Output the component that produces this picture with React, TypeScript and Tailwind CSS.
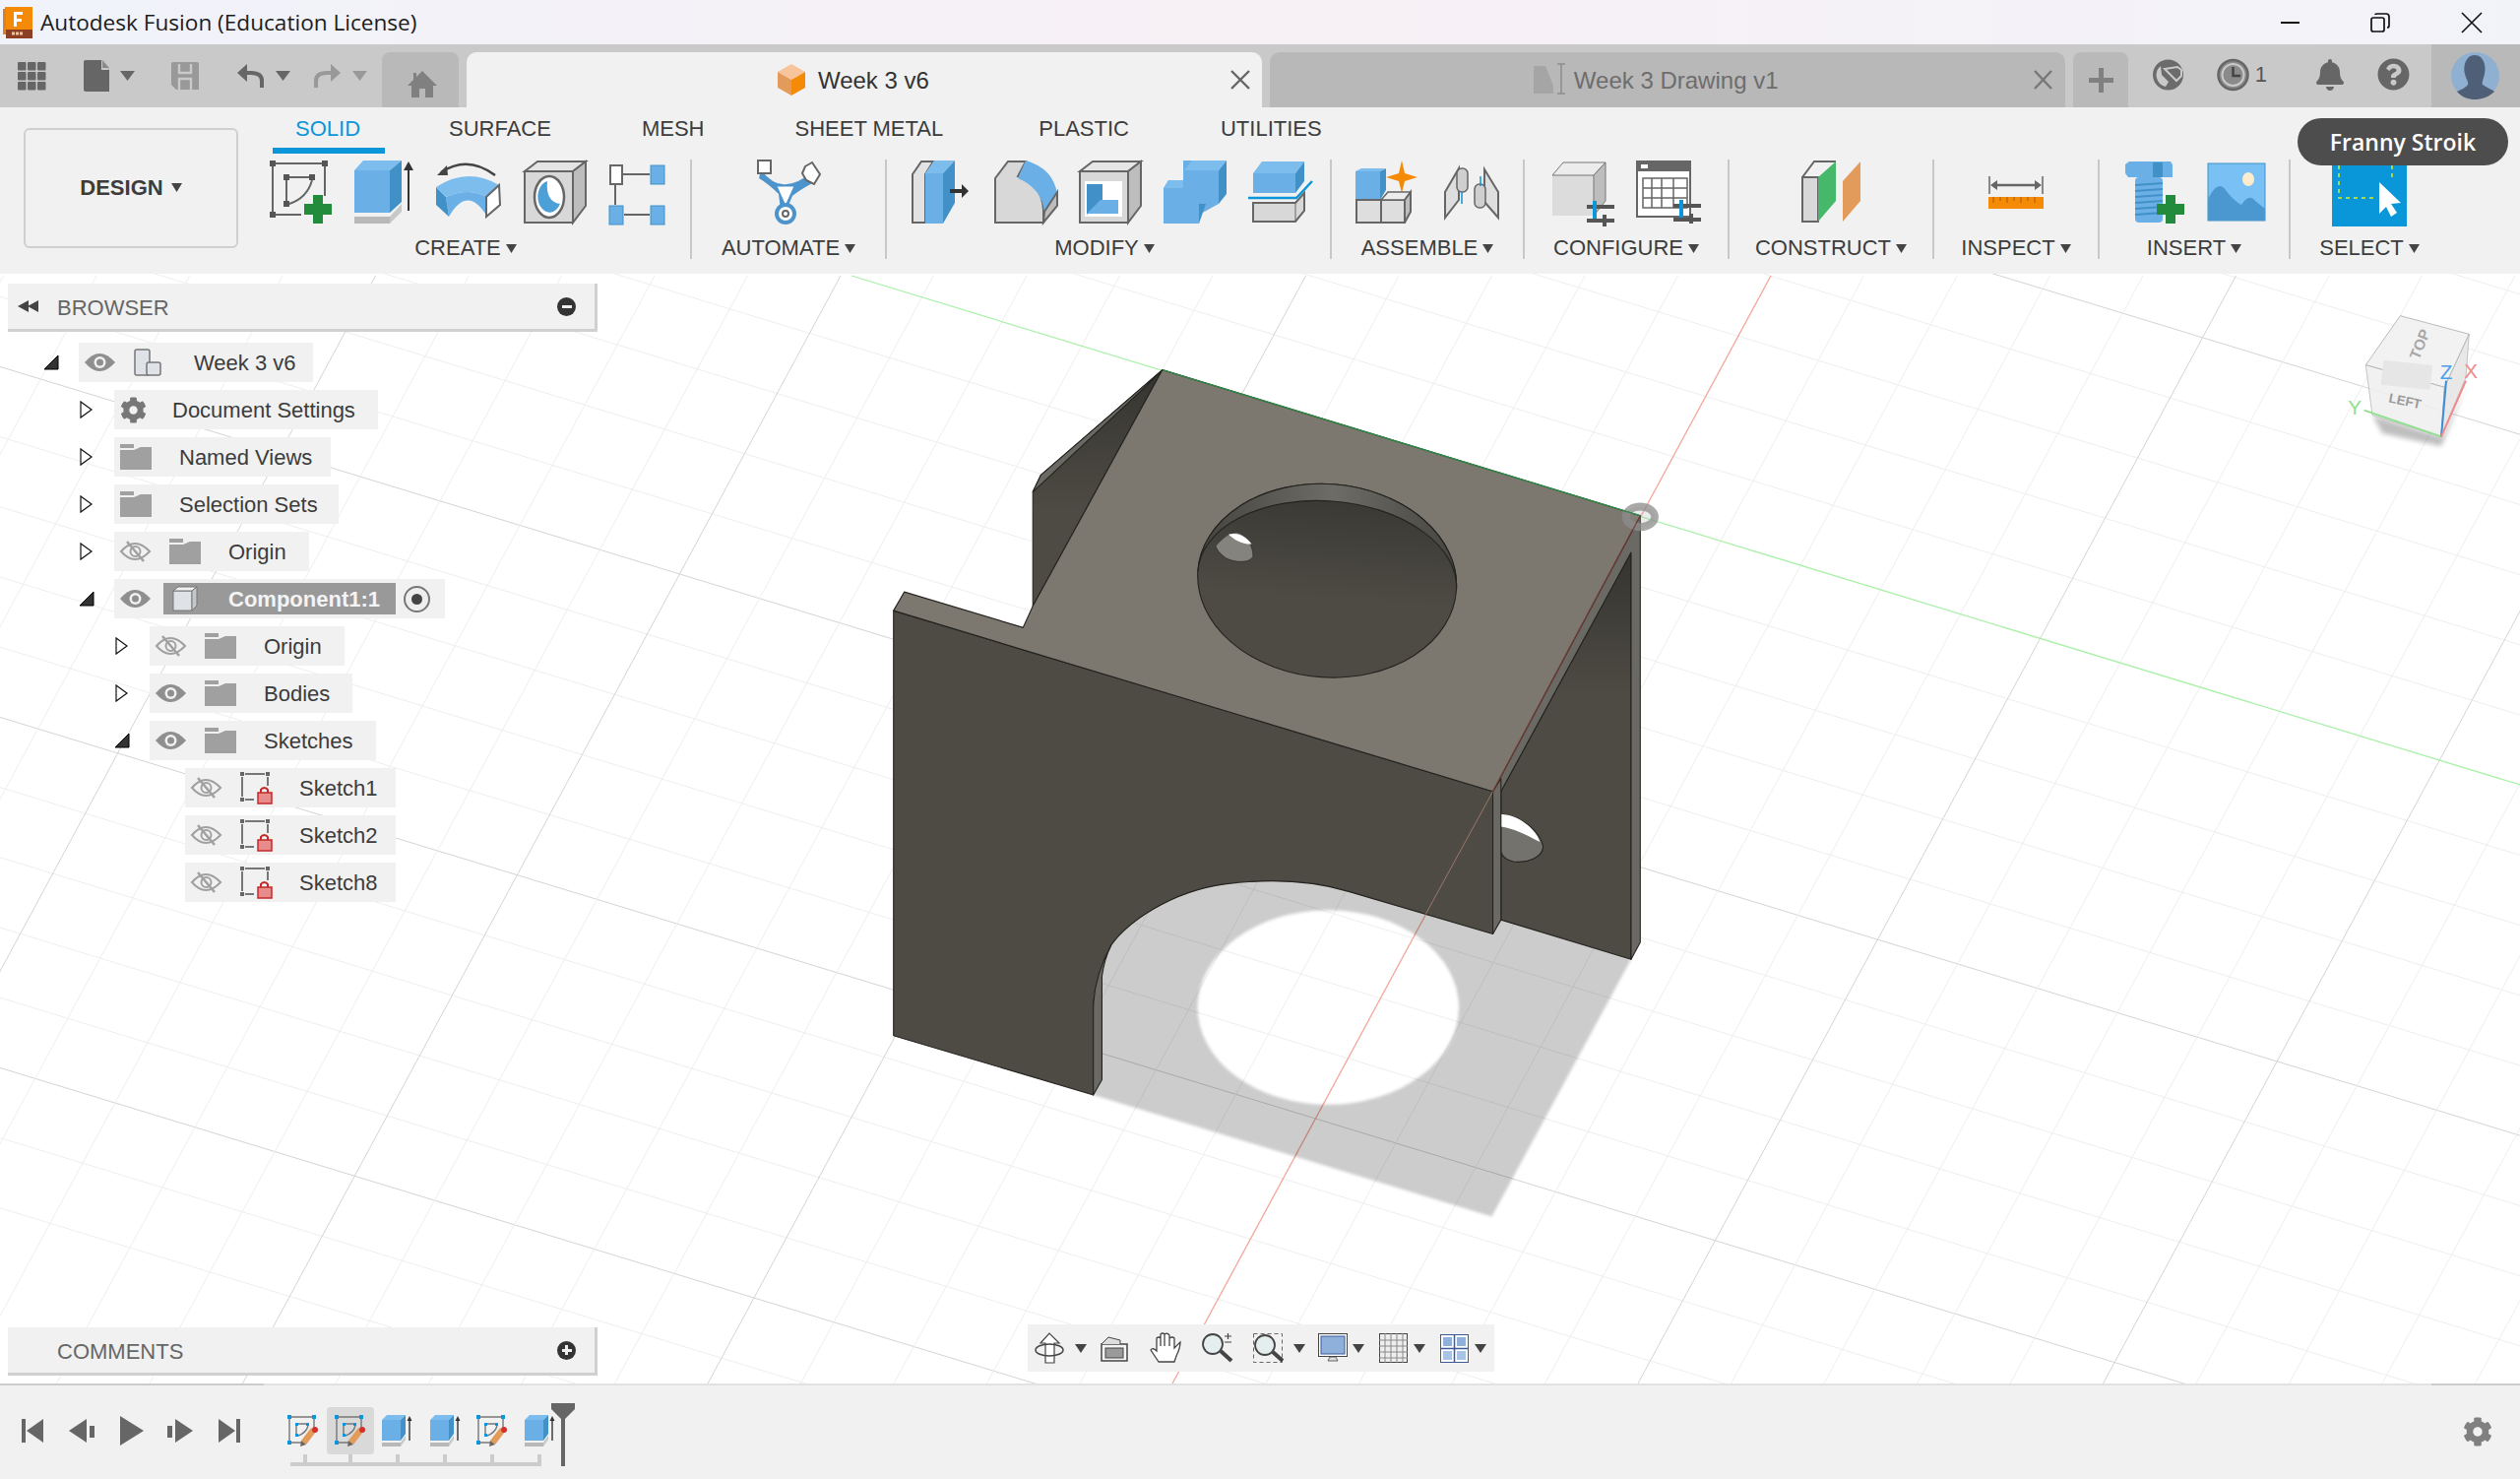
import type { ReactNode } from 'react';
import { FaBell, FaCog, FaQuestionCircle } from 'react-icons/fa';

const BLUE = '#6ab0e6';
const BLUE_D = '#4191c8';
const BLUE_L = '#7dbdee';
const LINE = '#666666';

function Ico({ w, h, children, className = '' }: { w: number; h: number; children: ReactNode; className?: string }) {
  return (
    <svg width={w} height={h} viewBox={`0 0 ${w} ${h}`} className={`shrink-0 overflow-visible ${className}`}>
      {children}
    </svg>
  );
}

function Caret({ w = 11, h = 9, fill = '#444444' }: { w?: number; h?: number; fill?: string }) {
  return (
    <Ico w={w} h={h}>
      <polygon points={`0,0 ${w},0 ${w / 2},${h}`} fill={fill} />
    </Ico>
  );
}

function GreenPlus({ x, y }: { x: number; y: number }) {
  return (
    <g transform={`translate(${x} ${y})`}>
      <rect x="0" y="9" width="28" height="11" fill="#228b3c" />
      <rect x="9" y="0" width="10" height="29" fill="#228b3c" />
    </g>
  );
}

/* ---------- ribbon icons ---------- */
const SketchIcon = () => (
  <Ico w={63} h={64}>
    <g fill="#555">
      <rect x="0" y="0" width="6" height="6" />
      <rect x="53" y="0" width="6" height="6" />
      <rect x="0" y="52" width="6" height="6" />
      <rect x="14" y="14" width="6" height="6" />
      <rect x="40" y="14" width="6" height="6" />
      <rect x="14" y="41" width="6" height="6" />
    </g>
    <path d="M6 3H53M3 6V52M56 6V36M6 55H32M20 17H40M17 20V41M20 44Q38 38 43 20" fill="none" stroke={LINE} strokeWidth="2" />
    <GreenPlus x={35} y={35} />
  </Ico>
);

const ExtrudeIcon = () => (
  <Ico w={60} h={64}>
    <rect x="0" y="10" width="36" height="43" fill={BLUE} />
    <polygon points="0,10 9,0 48,0 36,10" fill={BLUE_L} />
    <polygon points="36,10 48,0 48,42 36,53" fill={BLUE_D} />
    <rect x="0" y="57" width="36" height="7" fill="#b8b8b8" />
    <polygon points="36,57 48,44 48,52 36,64" fill="#c8c8c8" />
    <path d="M55 6V51" stroke="#333" strokeWidth="2" />
    <polygon points="50,10 55,1 60,10" fill="#333" />
  </Ico>
);

const RevolveIcon = () => (
  <Ico w={66} h={64}>
    <path d="M5 12Q32 -6 60 15" fill="none" stroke="#444" strokeWidth="2.5" />
    <polygon points="1,15 11,5 12,15" fill="#444" />
    <path d="M10 37Q32 27 52 37V57Q32 24 13 57Z" fill={BLUE} />
    <path d="M0 27L10 37L13 57L0 45Z" fill={BLUE_D} />
    <path d="M0 27Q32 6 64 25L52 37Q32 27 10 37Z" fill={BLUE_L} />
    <polygon points="51,37 64,25 65,45 51,57" fill="#fff" stroke={LINE} strokeWidth="2" />
  </Ico>
);

const HoleIcon = () => (
  <Ico w={64} h={64}>
    <rect x="1" y="11" width="49" height="52" fill="#d8d8d8" stroke={LINE} strokeWidth="2" />
    <polygon points="1,11 14,1 63,1 50,11" fill="#e4e4e4" stroke={LINE} strokeWidth="2" />
    <polygon points="50,11 63,1 63,46 50,63" fill="#bdbdbd" stroke={LINE} strokeWidth="2" />
    <ellipse cx="26" cy="37" rx="15" ry="21" fill="#fff" stroke={LINE} strokeWidth="2.5" />
    <path d="M24 21A12 16 0 1 0 37 44Q22 42 24 21Z" fill="#4d9fd8" />
  </Ico>
);

const PatternIcon = () => (
  <Ico w={57} h={64}>
    <rect x="1" y="5" width="12" height="19" fill="#fff" stroke={LINE} strokeWidth="2" />
    <rect x="42" y="5" width="14" height="19" fill={BLUE} stroke={BLUE_D} />
    <rect x="0" y="46" width="14" height="19" fill={BLUE} stroke={BLUE_D} />
    <rect x="42" y="46" width="14" height="19" fill={BLUE} stroke={BLUE_D} />
    <path d="M14 14H41M6 25V45M15 55H41" stroke={LINE} strokeWidth="2" />
  </Ico>
);

const AutomateIcon = () => (
  <Ico w={64} h={64}>
    <path d="M4 10Q16 24 26 24Q38 26 56 12L58 22Q40 32 36 36L30 50H24L22 34Q12 24 2 18Z" fill="#4d93cc" />
    <path d="M20 26H38L29 46Z" fill="#fff" stroke="#4d93cc" />
    <circle cx="29" cy="54" r="9" fill="#fff" stroke="#4d93cc" strokeWidth="4" />
    <circle cx="29" cy="54" r="3" fill="none" stroke={LINE} strokeWidth="2" />
    <rect x="1" y="0" width="13" height="13" fill="#fff" stroke={LINE} strokeWidth="2" />
    <polygon points="49,6 56,2 64,14 58,24 50,20 46,13" fill="#fff" stroke={LINE} strokeWidth="2" />
  </Ico>
);

const PressPullIcon = () => (
  <Ico w={58} h={64}>
    <polygon points="1,63 1,14 10,1 22,1 14,14 14,63" fill="#e2e2e2" stroke={LINE} strokeWidth="2" />
    <rect x="14" y="13" width="18" height="51" fill={BLUE} />
    <polygon points="14,13 23,0 44,0 32,13" fill={BLUE_L} />
    <polygon points="32,13 44,0 44,43 32,64" fill={BLUE_D} />
    <path d="M39 31H54" stroke="#333" strokeWidth="4" />
    <polygon points="51,24 58,31 51,38" fill="#333" />
  </Ico>
);

const FilletIcon = () => (
  <Ico w={64} h={64}>
    <path d="M1 63V18L14 1H32L24 16Q48 22 50 50V63Z" fill="#d8d8d8" stroke={LINE} strokeWidth="2" />
    <path d="M32 0Q60 8 64 34L51 52Q48 28 24 18Z" fill={BLUE} />
    <path d="M51 52L64 32V46L50 63Z" fill="#bdbdbd" stroke={LINE} strokeWidth="2" />
  </Ico>
);

const ShellIcon = () => (
  <Ico w={64} h={64}>
    <rect x="1" y="11" width="49" height="52" fill="#d8d8d8" stroke={LINE} strokeWidth="2" />
    <polygon points="1,11 14,1 63,1 50,11" fill="#e6e6e6" stroke={LINE} strokeWidth="2" />
    <polygon points="50,11 63,1 63,46 50,63" fill="#bdbdbd" stroke={LINE} strokeWidth="2" />
    <rect x="6" y="21" width="38" height="36" fill="#fff" />
    <polygon points="8,24 24,24 24,40 8,55" fill={BLUE_D} />
    <polygon points="8,54 22,40 40,40 40,54" fill={BLUE} />
  </Ico>
);

const CombineIcon = () => (
  <Ico w={64} h={64}>
    <polygon points="0,28 0,64 36,64 36,55 56,44 56,0 20,0 20,20 5,20" fill={BLUE} />
    <polygon points="21,10 29,0 64,0 56,10" fill={BLUE_L} />
    <polygon points="56,10 64,0 64,34 56,44" fill={BLUE_D} />
    <polygon points="0,28 6,20 20,20 20,28" fill={BLUE_L} />
    <polygon points="36,44 43,44 36,64" fill={BLUE_D} />
  </Ico>
);

const OffsetIcon = () => (
  <Ico w={65} h={62}>
    <rect x="5" y="12" width="43" height="20" fill={BLUE} />
    <polygon points="5,12 14,0 57,0 48,12" fill={BLUE_L} />
    <polygon points="48,12 57,0 57,20 48,32" fill={BLUE_D} />
    <path d="M0 37H49L65 20" fill="none" stroke="#0a96d8" strokeWidth="2.5" />
    <path d="M5 42H48L57 32V50L48 61H5Z" fill="#d8d8d8" stroke={LINE} strokeWidth="2" />
    <path d="M48 42V61" stroke={LINE} strokeWidth="1" />
  </Ico>
);

const JointNewIcon = () => (
  <Ico w={63} h={64}>
    <rect x="0" y="11" width="25" height="29" fill={BLUE} />
    <polygon points="0,11 6,8 30,8 25,11" fill={BLUE_L} />
    <polygon points="25,11 31,8 31,30 25,40" fill={BLUE_D} />
    <polygon points="47,0 50,13 63,17 50,21 47,33 44,21 31,17 44,13" fill="#f58a07" />
    <rect x="1" y="40" width="25" height="23" fill="#dedede" stroke={LINE} strokeWidth="2" />
    <rect x="26" y="40" width="24" height="23" fill="#dedede" stroke={LINE} strokeWidth="2" />
    <polygon points="26,40 33,32 56,32 50,40" fill="#ececec" stroke={LINE} strokeWidth="1.5" />
    <polygon points="50,40 56,32 56,52 50,63" fill="#bdbdbd" stroke={LINE} strokeWidth="2" />
  </Ico>
);

const JointIcon = () => (
  <Ico w={56} h={56}>
    <polygon points="1,28 15,4 15,36 1,54" fill="#dedede" stroke={LINE} strokeWidth="2" />
    <polygon points="41,5 55,28 55,54 41,38" fill="#dedede" stroke={LINE} strokeWidth="2" />
    <rect x="13" y="4" width="11" height="24" rx="5" fill="#cfcfcf" stroke={LINE} strokeWidth="1.5" />
    <rect x="31" y="20" width="11" height="24" rx="5" fill="#cfcfcf" stroke={LINE} strokeWidth="1.5" />
    <path d="M18 28V40M37 12V22" stroke="#0a96d8" strokeWidth="1.5" />
  </Ico>
);

const ConfigBox = () => (
  <Ico w={64} h={62}>
    <rect x="1" y="14" width="42" height="41" fill="#dcdcdc" />
    <polygon points="1,14 12,1 55,1 43,14" fill="#ececec" stroke="#777" />
    <polygon points="43,14 55,1 55,40 43,55" fill="#bdbdbd" stroke="#777" />
    <path d="M36 46H64M36 60H64" stroke="#555" strokeWidth="4" />
    <rect x="42" y="40" width="4" height="18" fill="#0a96d8" />
    <rect x="52" y="54" width="4" height="12" fill="#555" />
  </Ico>
);

const ConfigTable = () => (
  <Ico w={66} h={64}>
    <rect x="1" y="1" width="54" height="56" fill="#fff" stroke="#666" strokeWidth="2" />
    <rect x="0" y="0" width="56" height="11" fill="#666" />
    <rect x="5" y="4" width="7" height="4" fill="#fff" />
    <path d="M7 18H52V48H7ZM7 28H52M7 38H52M16 18V48M26 18V48M38 18V48" fill="#fff" stroke="#666" strokeWidth="1.5" />
    <path d="M38 46H66M38 60H66" stroke="#555" strokeWidth="4" />
    <rect x="44" y="40" width="4" height="18" fill="#0a96d8" />
    <rect x="54" y="54" width="4" height="10" fill="#555" />
  </Ico>
);

const ConstructIcon = () => (
  <Ico w={60} h={62}>
    <polygon points="1,16 1,61 17,61 17,16" fill="#d8d8d8" stroke={LINE} strokeWidth="2" />
    <path d="M1 16L13 0H35" fill="none" stroke={LINE} strokeWidth="2" />
    <polygon points="17,16 35,0 35,40 17,61" fill="#46b86a" />
    <polygon points="42,20 60,0 60,40 42,61" fill="#e39b5b" />
  </Ico>
);

const InspectIcon = () => (
  <Ico w={56} h={33}>
    <path d="M1 0V18M55 0V18" stroke={LINE} strokeWidth="1.5" />
    <path d="M6 9H50" stroke={LINE} strokeWidth="2.5" />
    <polygon points="2,9 9,4 9,14" fill={LINE} />
    <polygon points="54,9 47,4 47,14" fill={LINE} />
    <rect x="0" y="21" width="56" height="12" fill="#f58a07" />
    <path d="M5 21V27M12 21V25M19 21V27M26 21V25M33 21V27M40 21V25M47 21V27" stroke="#a65c00" strokeWidth="1" />
  </Ico>
);

const BoltIcon = () => (
  <Ico w={60} h={62}>
    <polygon points="0,3 4,0 46,0 48,3 48,16 44,16 3,16 0,12" fill={BLUE} />
    <rect x="28" y="1" width="10" height="15" fill={BLUE_D} />
    <rect x="10" y="16" width="28" height="46" rx="4" fill={BLUE} />
    <path d="M10 24L38 22M10 30L38 28M10 36L38 34M10 42L38 40M10 48L38 46M10 54L38 52" stroke={BLUE_D} strokeWidth="2" />
    <GreenPlus x={32} y={34} />
  </Ico>
);

const ImageIcon = () => (
  <Ico w={58} h={58}>
    <rect x="0" y="0" width="58" height="58" fill="#79c0f5" stroke="#4191c8" />
    <ellipse cx="41" cy="16" rx="6" ry="7" fill="#fbeccd" />
    <path d="M0 36Q10 16 18 27Q26 38 34 42Q42 30 48 38L58 46V58H0Z" fill="#4b97cf" />
  </Ico>
);

const SelectIcon = () => (
  <Ico w={76} h={70}>
    <rect x="0" y="0" width="76" height="70" fill="#0a97d9" />
    <path d="M7 8V41H46M61 8V24" fill="none" stroke="#a8d84a" strokeWidth="2" strokeDasharray="4 4" />
    <polygon points="48,25 48,57 55,50 60,60 66,56 60,47 70,46" fill="#fff" />
  </Ico>
);

/* ---------- tree icons ---------- */
const EyeOn = () => (
  <Ico w={31} h={20}>
    <path d="M0 10Q15 -8 31 10Q15 28 0 10Z" fill="#8f8f8f" />
    <circle cx="15.5" cy="10" r="6" fill="#f1f1f1" />
    <circle cx="15.5" cy="10" r="3.5" fill="#8f8f8f" />
  </Ico>
);

const EyeOff = () => (
  <Ico w={31} h={20}>
    <path d="M1 10Q15 -6 30 10Q15 26 1 10Z" fill="none" stroke="#a0a0a0" strokeWidth="2" />
    <circle cx="15.5" cy="10" r="5" fill="none" stroke="#a0a0a0" strokeWidth="2" />
    <path d="M7 0L24 20" stroke="#a0a0a0" strokeWidth="2.5" />
  </Ico>
);

const Folder = () => (
  <Ico w={32} h={26}>
    <rect x="0" y="0" width="14" height="4" fill="#a0a0a0" />
    <polygon points="0,6 14,6 21,3 32,3 32,26 0,26" fill="#a0a0a0" />
  </Ico>
);

const DocIcon = () => (
  <Ico w={28} h={28}>
    <rect x="1" y="1" width="15" height="26" rx="2" fill="#dfe3e8" stroke="#777" strokeWidth="1.5" />
    <rect x="13" y="14" width="14" height="13" rx="2" fill="#dfe3e8" stroke="#777" strokeWidth="1.5" />
  </Ico>
);

const SketchLock = () => (
  <Ico w={32} h={32}>
    <g fill="#666">
      <rect x="0" y="0" width="4" height="4" />
      <rect x="26" y="0" width="4" height="4" />
      <rect x="0" y="26" width="4" height="4" />
    </g>
    <path d="M5 2H25M2 5V25M5 28H14M28 5V14" stroke="#777" strokeWidth="2" />
    <path d="M21 22V18A4 4 0 0 1 28 18V22" fill="none" stroke="#c62828" strokeWidth="2" />
    <rect x="18" y="21" width="14" height="11" fill="#e78b8b" stroke="#c62828" strokeWidth="1.5" />
  </Ico>
);

const TriOpen = () => (
  <Ico w={14} h={14}>
    <polygon points="0,14 14,0 14,14" fill="#333" stroke="#000" />
  </Ico>
);

const TriClosed = () => (
  <Ico w={13} h={18}>
    <polygon points="1,1 12,9 1,17" fill="#fff" stroke="#111" strokeWidth="1.2" />
  </Ico>
);

type RowProps = {
  indent: string;
  tri?: 'open' | 'closed';
  width: string;
  eye?: 'on' | 'off';
  icon: ReactNode;
  text: string;
  textClass: string;
};

function Row({ indent, tri, width, eye, icon, text, textClass }: RowProps) {
  return (
    <div className={`flex items-center ${indent}`}>
      {tri && (
        <span className="flex w-[35px] shrink-0 items-center">{tri === 'open' ? <TriOpen /> : <TriClosed />}</span>
      )}
      <div className={`flex h-[40px] items-center gap-[19px] bg-[#f1f1f1] px-[6px] ${width}`}>
        {eye === 'on' && <EyeOn />}
        {eye === 'off' && <EyeOff />}
        {icon}
        <span className={`whitespace-nowrap text-[22px] text-[#3c3c3c] ${textClass}`}>{text}</span>
      </div>
    </div>
  );
}

function Tree() {
  return (
    <div className="mt-[11px] flex flex-col gap-[8px]">
      <Row indent="pl-[37px]" tri="open" width="w-[238px]" eye="on" icon={<DocIcon />} text="Week 3 v6" textClass="ml-[14px]" />
      <Row indent="pl-[73px]" tri="closed" width="w-[268px]" icon={<FaCog className="h-[27px] w-[27px] shrink-0 text-[#777777]" />} text="Document Settings" textClass="ml-[7px]" />
      <Row indent="pl-[73px]" tri="closed" width="w-[220px]" icon={<Folder />} text="Named Views" textClass="ml-[9px]" />
      <Row indent="pl-[73px]" tri="closed" width="w-[228px]" icon={<Folder />} text="Selection Sets" textClass="ml-[9px]" />
      <Row indent="pl-[73px]" tri="closed" width="w-[198px]" eye="off" icon={<Folder />} text="Origin" textClass="ml-[9px]" />
      <div className="flex items-center pl-[73px]">
        <span className="flex w-[35px] shrink-0 items-center">
          <TriOpen />
        </span>
        <div className="flex h-[40px] w-[336px] items-center bg-[#f1f1f1] pl-[6px]">
          <EyeOn />
          <div className="ml-[13px] flex h-[32px] w-[236px] items-center bg-[#999999] pl-[9px]">
            <Ico w={26} h={26}>
              <rect x="1" y="5" width="19" height="20" fill="#dfe3e8" stroke="#777" />
              <polygon points="1,5 6,1 25,1 20,5" fill="#f2f2f2" stroke="#777" />
              <polygon points="20,5 25,1 25,20 20,25" fill="#c4c8cc" stroke="#777" />
            </Ico>
            <span className="ml-[31px] whitespace-nowrap text-[22px] font-bold text-[#f4f4f4]">Component1:1</span>
          </div>
          <span className="ml-[8px] flex h-[27px] w-[27px] items-center justify-center rounded-full border-2 border-[#777777] bg-[#eeeeee]">
            <span className="h-[11px] w-[11px] rounded-full bg-[#444444]" />
          </span>
        </div>
      </div>
      <Row indent="pl-[109px]" tri="closed" width="w-[198px]" eye="off" icon={<Folder />} text="Origin" textClass="ml-[9px]" />
      <Row indent="pl-[109px]" tri="closed" width="w-[206px]" eye="on" icon={<Folder />} text="Bodies" textClass="ml-[9px]" />
      <Row indent="pl-[109px]" tri="open" width="w-[230px]" eye="on" icon={<Folder />} text="Sketches" textClass="ml-[9px]" />
      {['Sketch1', 'Sketch2', 'Sketch8'].map((s) => (
        <Row key={s} indent="pl-[180px]" width="w-[214px]" eye="off" icon={<SketchLock />} text={s} textClass="ml-[9px]" />
      ))}
    </div>
  );
}

/* ---------- viewport drawing ---------- */
function GridLines() {
  const minorA = Array.from({ length: 36 }, (_, i) => i - 18);
  const minorB = Array.from({ length: 46 }, (_, i) => i - 22);
  return (
    <g>
      {minorA.map((k) => {
        const b = 16.4 + k * 71.2;
        const major = k % 5 === 0;
        if (k === 0) return null;
        return (
          <line key={`a${k}`} x1={0} y1={b} x2={2560} y2={b + 2560 * 0.305} stroke={major ? '#d4d4d4' : '#eeeeee'} strokeWidth={1} />
        );
      })}
      {minorB.map((k) => {
        const x0 = 1799 + k * 94.5;
        const major = k % 5 === 0;
        if (k === 0) return null;
        return (
          <line key={`b${k}`} x1={x0} y1={280} x2={x0 - 0.54 * 1125} y2={1405} stroke={major ? '#d4d4d4' : '#eeeeee'} strokeWidth={1} />
        );
      })}
      <line x1={865} y1={280} x2={2560} y2={797} stroke="#a9f0a9" strokeWidth="1.3" />
      <line x1={1799} y1={280} x2={1191} y2={1405} stroke="#f4a69c" strokeWidth="1.3" />
    </g>
  );
}

function Part() {
  const FACE = '#4e4b44';
  const RIM = '#6b6964';
  const TOP = '#7c7870';
  return (
    <g transform="translate(860 340) scale(0.5485 0.574)" stroke="#24231f" strokeWidth="2" strokeLinejoin="round">
      <path
        d="M457 940L1212 940L1453 1105L1195 1560L457 1345ZM650 1190A242 172 0 0 0 1134 1190A242 172 0 0 0 650 1190Z"
        fill="#000"
        fillOpacity="0.2"
        fillRule="evenodd"
        stroke="none"
        filter="url(#soft)"
      />
      {/* back flange */}
      <polygon points="345,278 360,248 585,62 345,480" fill="url(#flangeL)" />
      <polygon points="345,278 360,248 585,62 550,95" fill={RIM} />
      {/* right flange */}
      <polygon points="1212,808 1453,385 1453,1105 1212,1035" fill="url(#flangeR)" />
      <path d="M1212 848C1250 850 1285 880 1290 905C1290 925 1260 935 1235 932C1225 930 1215 925 1212 915Z" fill="#74726d" />
      <path d="M1212 848C1250 850 1278 878 1284 897C1260 885 1232 872 1212 870Z" fill="#fff" stroke="none" />
      <polygon points="1470,320 1470,1075 1453,1105 1453,385 1212,808 1197,808" fill={RIM} />
      {/* front plate */}
      <path d="M87 488L1197 808V1060L930 985C860 965 780 962 700 972C600 985 520 1040 490 1080C470 1115 457 1150 457 1195V1345L87 1240Z" fill={FACE} />
      <path d="M457 1345L473 1318V1135C476 1115 482 1095 490 1080C470 1115 457 1150 457 1195Z" fill={RIM} />
      <polygon points="1197,808 1212,785 1212,1035 1197,1060" fill={RIM} />
      {/* top face */}
      <polygon points="585,62 1470,320 1197,808 87,488 107,455 327,518 345,480" fill={TOP} />
      <g transform="rotate(4 890 435)">
        <ellipse cx="890" cy="435" rx="240" ry="171" fill="url(#holeIn)" />
        <path d="M650 435A240 171 0 0 1 1130 435A240 141 0 0 0 650 435Z" fill="url(#holeRim)" />
        <path d="M680 388C690 375 705 360 720 362C735 365 750 385 750 402C745 415 715 415 700 408C690 402 682 395 680 388Z" fill="#85837d" strokeWidth="1" />
        <path d="M702 366C720 360 735 368 746 380C730 382 715 376 702 366Z" fill="#fff" stroke="none" />
      </g>
      {/* origin marker */}
      <ellipse cx="1470" cy="322" rx="27" ry="18" fill="#9a9a9a" fillOpacity="0.2" stroke="#8c8c8c" strokeOpacity="0.75" strokeWidth="14" />
      <line x1="585" y1="62" x2="1470" y2="320" stroke="#2f8a46" strokeWidth="2.5" />
      <line x1="1470" y1="320" x2="1197" y2="808" stroke="#7b3f36" strokeWidth="2" />
      <line x1="1197" y1="808" x2="1072" y2="1026" stroke="#f4a69c" strokeWidth="1.4" strokeOpacity="0.6" />
    </g>
  );
}

function ViewportDrawing() {
  return (
    <svg className="absolute inset-0 h-full w-full" viewBox="0 278 2560 1127">
      <defs>
        <filter id="soft" x="-10%" y="-10%" width="120%" height="120%">
          <feGaussianBlur stdDeviation="3" />
        </filter>
        <filter id="cubeShadow" x="-40%" y="-40%" width="180%" height="180%">
          <feGaussianBlur stdDeviation="8" />
        </filter>
        <linearGradient id="flangeL" x1="0" y1="0" x2="0" y2="1">
          <stop offset="0" stopColor="#35342f" />
          <stop offset="0.6" stopColor="#4e4b44" />
        </linearGradient>
        <linearGradient id="flangeR" x1="0" y1="0" x2="0" y2="1">
          <stop offset="0" stopColor="#35342f" />
          <stop offset="0.35" stopColor="#4e4b44" />
        </linearGradient>
        <linearGradient id="holeIn" x1="0" y1="0" x2="0" y2="1">
          <stop offset="0.1" stopColor="#3b3a35" />
          <stop offset="0.6" stopColor="#4e4b44" />
        </linearGradient>
        <linearGradient id="holeRim" x1="0" y1="0" x2="1" y2="0">
          <stop offset="0" stopColor="#45443f" />
          <stop offset="0.5" stopColor="#6e6c66" />
          <stop offset="1" stopColor="#45443f" />
        </linearGradient>
      </defs>
      <GridLines />
      <Part />
    </svg>
  );
}

function ViewCube() {
  return (
    <svg className="absolute right-[0px] top-[2px] overflow-visible" width="220" height="200" viewBox="0 0 660 600">
      <polygon points="210,425 420,490 500,330 420,520 240,480" fill="#000" opacity="0.25" filter="url(#cubeShadow)" />
      <polygon points="295,122 505,178 430,340 190,272" fill="#f0f0f0" fillOpacity="0.85" stroke="#9a9a9a" strokeWidth="2" />
      <polygon points="190,272 430,340 420,490 210,425" fill="#eeeeee" fillOpacity="0.85" stroke="#aaaaaa" strokeWidth="2" />
      <polygon points="505,178 430,340 420,490 495,310" fill="#e4e4e4" fillOpacity="0.85" stroke="#aaaaaa" strokeWidth="2" />
      <rect x="240" y="265" width="150" height="75" fill="#e6e6e6" transform="rotate(6 315 300)" />
      <text x="0" y="0" fontFamily="Liberation Sans" fontSize="46" fontWeight="700" fill="#a8a8a8" transform="translate(352 258) rotate(-68)">TOP</text>
      <text x="0" y="0" fontFamily="Liberation Sans" fontSize="40" fontWeight="700" fill="#9a9a9a" transform="translate(258 385) rotate(12)">LEFT</text>
      <line x1="185" y1="410" x2="420" y2="490" stroke="#8fe08f" strokeWidth="6" />
      <line x1="420" y1="490" x2="435" y2="320" stroke="#3d8ed6" strokeWidth="6" />
      <line x1="420" y1="490" x2="495" y2="320" stroke="#f08a8a" strokeWidth="6" />
      <text x="136" y="422" fontFamily="Liberation Sans" fontSize="62" fill="#8fe08f">Y</text>
      <text x="416" y="316" fontFamily="Liberation Sans" fontSize="62" fill="#4da0ee">Z</text>
      <text x="490" y="312" fontFamily="Liberation Sans" fontSize="62" fill="#f08a8a">X</text>
    </svg>
  );
}

function NavBar() {
  const stroke = '#444444';
  return (
    <div className="absolute bottom-[12px] left-[1044px] flex h-[48px] w-[474px] items-center bg-[#f1f1f1] pl-[8px]">
      <Ico w={29} h={30}>
        <path d="M10 30V10H5L14 0L24 10H19V30Z" fill="#fff" stroke={stroke} strokeWidth="1.2" />
        <ellipse cx="14" cy="17" rx="14" ry="6" fill="none" stroke={stroke} strokeWidth="1.5" />
      </Ico>
      <span className="ml-[11px] flex"><Caret w={12} h={9} /></span>
      <span className="ml-[14px] flex">
        <Ico w={28} h={28}>
          <rect x="1" y="10" width="26" height="17" fill="#f4f4f4" stroke={stroke} strokeWidth="1.5" />
          <rect x="5" y="14" width="18" height="10" fill="#9a9a9a" stroke={stroke} />
          <path d="M1 10L8 3L20 6V10" fill="#ddd" stroke={stroke} />
        </Ico>
      </span>
      <span className="ml-[23px] flex">
        <Ico w={30} h={32}>
          <path d="M8 30L0 18Q2 15 6 19V6Q8 4 10 6V14V2Q12 0 14 2V14V2Q17 0 19 3V14V6Q22 4 24 6V16L30 10Q30 16 26 24L24 30Z" fill="#fff" stroke={stroke} strokeWidth="1.3" />
        </Ico>
      </span>
      <span className="ml-[22px] flex">
        <Ico w={31} h={30}>
          <circle cx="11" cy="11" r="10" fill="#e4eeee" stroke={stroke} strokeWidth="1.8" />
          <path d="M19 18L30 28" stroke={stroke} strokeWidth="4" />
          <path d="M23 3H30M26.5 0V6M23 9H30" stroke={stroke} strokeWidth="1.2" />
        </Ico>
      </span>
      <span className="ml-[21px] flex">
        <Ico w={30} h={30}>
          <rect x="0.5" y="0.5" width="29" height="29" fill="none" stroke="#666" strokeDasharray="4 3" />
          <circle cx="12" cy="12" r="10" fill="#e4eeee" stroke={stroke} strokeWidth="1.8" />
          <path d="M20 19L30 28" stroke={stroke} strokeWidth="4" />
        </Ico>
      </span>
      <span className="ml-[11px] flex"><Caret w={12} h={9} /></span>
      <span className="ml-[13px] flex">
        <Ico w={30} h={30}>
          <rect x="0.5" y="0.5" width="29" height="23" fill="#fff" stroke={stroke} />
          <rect x="3" y="3" width="24" height="18" fill="#8fb0db" stroke="#3b5a9a" />
          <path d="M12 24H18L20 28H10Z" fill="#ddd" stroke={stroke} strokeWidth="0.8" />
        </Ico>
      </span>
      <span className="ml-[5px] flex"><Caret w={12} h={9} /></span>
      <span className="ml-[15px] flex">
        <Ico w={29} h={30}>
          <rect x="0.5" y="0.5" width="28" height="29" fill="#eee" stroke={stroke} />
          <path d="M0 7H29M0 13H29M0 19H29M0 25H29M6 0V30M12 0V30M18 0V30M24 0V30" stroke="#888" strokeWidth="1" />
        </Ico>
      </span>
      <span className="ml-[6px] flex"><Caret w={12} h={9} /></span>
      <span className="ml-[15px] flex">
        <Ico w={29} h={29}>
          <rect x="0.5" y="0.5" width="28" height="28" fill="#fff" stroke="#3b5a9a" />
          <path d="M14.5 0V29M0 14.5H29" stroke="#3b5a9a" strokeWidth="1.5" />
          <rect x="3" y="3" width="9" height="9" fill="#8fb0db" />
          <rect x="17" y="3" width="9" height="9" fill="#8fb0db" />
          <rect x="3" y="17" width="9" height="9" fill="#a9c3e4" />
          <rect x="17" y="17" width="9" height="9" fill="#a9c3e4" />
        </Ico>
      </span>
      <span className="ml-[6px] flex"><Caret w={12} h={9} /></span>
    </div>
  );
}

/* ---------- chrome ---------- */
function TitleBar() {
  return (
    <div className="flex h-[45px] items-center bg-gradient-to-r from-[#f0f3fa] via-[#f7f0f5] to-[#f2f3f9] pl-[3px]">
      <Ico w={30} h={32}>
        <polygon points="2,0 30,0 30,24 2,24" fill="#f58a07" />
        <rect x="0" y="2" width="3" height="26" fill="#d9822a" />
        <rect x="3" y="23" width="27" height="9" fill="#8d3f26" />
        <path d="M11 5H20V8H14V12H19V15H14V20H11Z" fill="#fff" />
        <path d="M9 27H21" stroke="#f3c39a" strokeWidth="3" strokeDasharray="3 1" />
      </Ico>
      <span className="ml-[8px] whitespace-nowrap pt-[1px] font-['Open_Sans',sans-serif] text-[22.6px] text-[#1c1c1c]">
        Autodesk Fusion (Education License)
      </span>
      <div className="ml-auto flex items-center pr-[39px]">
        <span className="h-[2px] w-[19px] bg-[#111111]" />
        <span className="ml-[72px] flex">
          <Ico w={20} h={20}>
            <rect x="1" y="5" width="13" height="14" rx="2" fill="none" stroke="#111" strokeWidth="1.7" />
            <path d="M5 2Q5 1 7 1H16Q19 1 19 4V13Q19 15 17 15" fill="none" stroke="#111" strokeWidth="1.7" />
          </Ico>
        </span>
        <span className="ml-[73px] flex">
          <Ico w={20} h={20}>
            <path d="M0 0L20 20M20 0L0 20" stroke="#111" strokeWidth="1.6" />
          </Ico>
        </span>
      </div>
    </div>
  );
}

function TabBar() {
  return (
    <div className="flex h-[64px] bg-[#c9c9c9]">
      <div className="flex h-full w-[388px] items-center pl-[18px]">
        <Ico w={29} h={28}>
          {[0, 10, 20].map((y) =>
            [0, 10, 20].map((x) => <rect key={`${x}-${y}`} x={x} y={y} width="8.5" height="8.5" rx="1" fill="#666" />),
          )}
        </Ico>
        <span className="ml-[38px] flex">
          <Ico w={26} h={32}>
            <path d="M2 0H18L26 10V32H2Q0 32 0 30V2Q0 0 2 0Z" fill="#666" />
            <path d="M18 0V10H26Z" fill="#c9c9c9" />
            <path d="M19 0L26 8H19Z" fill="#8a8a8a" />
          </Ico>
        </span>
        <span className="ml-[11px] flex"><Caret w={15} h={10} fill="#666666" /></span>
        <span className="ml-[37px] flex">
          <Ico w={28} h={28}>
            <path d="M2 0H26Q28 0 28 2V28H5L0 23V2Q0 0 2 0Z" fill="#999" />
            <path d="M8 2V11H20V2M8 28V17H20V28" fill="none" stroke="#c9c9c9" strokeWidth="2.4" />
          </Ico>
        </span>
        <span className="ml-[39px] flex">
          <Ico w={27} h={24}>
            <path d="M25 24V17Q25 9 14 9H5" fill="none" stroke="#666" strokeWidth="4" />
            <polygon points="0,9 10,0 10,18" fill="#666" />
          </Ico>
        </span>
        <span className="ml-[12px] flex"><Caret w={15} h={10} fill="#666666" /></span>
        <span className="ml-[24px] flex">
          <Ico w={27} h={24}>
            <path d="M2 24V17Q2 9 13 9H22" fill="none" stroke="#999" strokeWidth="4" />
            <polygon points="27,9 17,0 17,18" fill="#999" />
          </Ico>
        </span>
        <span className="ml-[12px] flex"><Caret w={15} h={10} fill="#999999" /></span>
      </div>
      <div className="mt-[8px] flex w-[78px] items-center justify-center rounded-t-[8px] bg-[#b9b9b9] pl-[5px] pt-[8px]">
        <Ico w={30} h={27}>
          <path d="M15 0L30 15H26V27H18V18H12V27H4V15H0L6 9V2H9V6Z" fill="#808080" />
        </Ico>
      </div>
      <div className="ml-[8px] mt-[8px] flex w-[808px] items-center rounded-t-[10px] bg-[#f1f1f1] pl-[316px]">
        <Ico w={28} h={32}>
          <polygon points="14,0 28,8 14,16 0,8" fill="#f7c49b" />
          <polygon points="0,8 14,16 14,32 0,24" fill="#e39b5b" />
          <polygon points="28,8 14,16 14,32 28,24" fill="#f58a07" />
        </Ico>
        <span className="ml-[13px] pt-[2px] text-[24px] text-[#333333]">Week 3 v6</span>
        <span className="ml-auto mr-[12px] flex">
          <Ico w={20} h={18}>
            <path d="M1 0L19 18M19 0L1 18" stroke="#666" strokeWidth="2.4" />
          </Ico>
        </span>
      </div>
      <div className="ml-[8px] mt-[8px] flex w-[808px] items-center rounded-t-[10px] bg-[#b8b8b8] pl-[268px]">
        <Ico w={32} h={32}>
          <path d="M0 2H12L20 22V30H0Z" fill="#a5a5a5" />
          <path d="M24 0H32M28 0V30M24 30H32" stroke="#8c8c8c" strokeWidth="1.5" />
        </Ico>
        <span className="ml-[9px] pt-[2px] text-[24px] text-[#6d6d6d]">Week 3 Drawing v1</span>
        <span className="ml-auto mr-[13px] flex">
          <Ico w={19} h={18}>
            <path d="M1 0L18 18M18 0L1 18" stroke="#777" strokeWidth="2.4" />
          </Ico>
        </span>
      </div>
      <div className="ml-[8px] mt-[8px] flex w-[56px] items-center justify-center rounded-t-[8px] bg-[#b9b9b9] pl-[2px]">
        <Ico w={25} h={25}>
          <path d="M12.5 0V25M0 12.5H25" stroke="#808080" strokeWidth="5" />
        </Ico>
      </div>
      <div className="ml-[25px] flex items-center pb-[3px]">
        <Ico w={31} h={32}>
          <circle cx="15.5" cy="16" r="15.5" fill="#6b6b6b" />
          <path d="M8 7A12 12 0 0 0 13 28L16 23L9 16Z" fill="#c9c9c9" />
          <path d="M12 10L24 22L29 17V11L25 8Z" fill="#6b6b6b" stroke="#c9c9c9" strokeWidth="2" />
        </Ico>
        <span className="ml-[34px] flex">
          <Ico w={33} h={32}>
            <ellipse cx="16.5" cy="16" rx="15" ry="15" fill="#8a8a8a" stroke="#666" strokeWidth="2.5" />
            <ellipse cx="16.5" cy="16" rx="11" ry="11" fill="none" stroke="#c9c9c9" strokeWidth="2" />
            <path d="M16.5 8V17H24" fill="none" stroke="#444" strokeWidth="2.5" />
          </Ico>
        </span>
        <span className="ml-[6px] text-[22px] leading-none text-[#555555]">1</span>
        <FaBell className="ml-[50px] h-[32px] w-[28px] text-[#666666]" />
        <FaQuestionCircle className="ml-[34px] h-[33px] w-[33px] text-[#666666]" />
      </div>
      <div className="ml-[22px] flex w-[90px] items-center justify-center bg-[#b9b9b9]">
        <Ico w={49} h={48}>
          <ellipse cx="24.5" cy="24" rx="24.5" ry="24" fill="#8fb0d0" />
          <path d="M24 3C33 3 36 14 34 22C33 27 31 30 32 33C36 36 42 38 44 40C38 46 30 48 24 48C18 48 11 46 6 40C10 38 15 36 17 33C18 30 15 27 14 22C12 14 15 3 24 3Z" fill="#4f5f78" />
        </Ico>
      </div>
    </div>
  );
}

const ribbonTabs = [
  { label: 'SOLID', cls: 'ml-[32px] w-[114px] pl-[23px] text-[#0a96d8] border-[#0a96d8]' },
  { label: 'SURFACE', cls: 'ml-[65px] text-[#3c3c3c] border-transparent' },
  { label: 'MESH', cls: 'ml-[92px] text-[#3c3c3c] border-transparent' },
  { label: 'SHEET METAL', cls: 'ml-[92px] text-[#3c3c3c] border-transparent' },
  { label: 'PLASTIC', cls: 'ml-[97px] text-[#3c3c3c] border-transparent' },
  { label: 'UTILITIES', cls: 'ml-[93px] text-[#3c3c3c] border-transparent' },
];

type GroupProps = { width: string; label: string; gap: string; last?: boolean; labelClass?: string; children: ReactNode };

function Group({ width, label, gap, last, labelClass = '', children }: GroupProps) {
  return (
    <div className={`flex h-[101px] shrink-0 flex-col items-center ${last ? '' : 'border-r-2 border-[#c8c8c8]'} ${width}`}>
      <div className={`flex h-[65px] items-center pt-[1px] ${gap}`}>{children}</div>
      <div className={`mt-[14px] flex items-center gap-[5px] whitespace-nowrap text-[22px] leading-[22px] text-[#3c3c3c] ${labelClass}`}>
        {label}
        <Caret />
      </div>
    </div>
  );
}

function Ribbon() {
  return (
    <div className="flex h-[169px] bg-[#f1f1f1]">
      <div className="pl-[24px] pt-[21px]">
        <div className="flex h-[122px] w-[218px] items-center justify-center gap-[8px] rounded-[6px] border-2 border-[#cfcfcf] pb-[2px] text-[22px] font-bold text-[#3c3c3c]">
          DESIGN
          <Caret />
        </div>
      </div>
      <div className="pl-[3px]">
        <div className="flex h-[47px]">
          {ribbonTabs.map((t) => (
            <div key={t.label} className={`flex h-[47px] items-center whitespace-nowrap border-b-[6px] pt-[1px] text-[22px] ${t.cls}`}>
              {t.label}
            </div>
          ))}
        </div>
        <div className="mt-[6px] flex">
          <Group width="w-[458px]" label="CREATE" gap="gap-[23px] pl-[3px]">
            <SketchIcon />
            <ExtrudeIcon />
            <RevolveIcon />
            <HoleIcon />
            <PatternIcon />
          </Group>
          <Group width="w-[198px]" label="AUTOMATE" gap="">
            <AutomateIcon />
          </Group>
          <Group width="w-[452px]" label="MODIFY" gap="gap-[22px] pl-[7px]" labelClass="mr-[8px]">
            <PressPullIcon />
            <span className="ml-[4px] flex">
              <FilletIcon />
            </span>
            <ShellIcon />
            <CombineIcon />
            <OffsetIcon />
          </Group>
          <Group width="w-[196px]" label="ASSEMBLE" gap="gap-[27px]">
            <JointNewIcon />
            <JointIcon />
          </Group>
          <Group width="w-[208px]" label="CONFIGURE" gap="gap-[22px]">
            <ConfigBox />
            <ConfigTable />
          </Group>
          <Group width="w-[208px]" label="CONSTRUCT" gap="">
            <ConstructIcon />
          </Group>
          <Group width="w-[168px]" label="INSPECT" gap="">
            <InspectIcon />
          </Group>
          <Group width="w-[194px]" label="INSERT" gap="gap-[24px] pl-[2px]">
            <BoltIcon />
            <ImageIcon />
          </Group>
          <Group width="w-[160px]" label="SELECT" gap="" last>
            <SelectIcon />
          </Group>
        </div>
      </div>
    </div>
  );
}

function Panel({ title, back, sign }: { title: string; back?: boolean; sign: '-' | '+' }) {
  return (
    <div className="flex h-[49px] w-[599px] items-center border-b-[3px] border-r-[3px] border-[#d0d0d0] bg-[#f1f1f1] pl-[10px] pr-[19px] text-[22px] text-[#666666]">
      <span className="flex w-[40px]">
        {back && (
          <Ico w={21} h={12}>
            <polygon points="0,6 11,0 11,12" fill="#444" />
            <polygon points="10,6 21,0 21,12" fill="#444" />
          </Ico>
        )}
      </span>
      <span className="pt-[2px]">{title}</span>
      <span className="ml-auto flex h-[19px] w-[19px] items-center justify-center rounded-full bg-[#333333]">
        <span className="relative block h-[3px] w-[10px] bg-[#eeeeee]">
          {sign === '+' && <span className="absolute left-[3.5px] top-[-3.5px] block h-[10px] w-[3px] bg-[#eeeeee]" />}
        </span>
      </span>
    </div>
  );
}

function SmallSketch() {
  return (
    <Ico w={32} h={32}>
      <g fill="#0a96d8">
        <rect x="0" y="0" width="4" height="4" />
        <rect x="25" y="0" width="4" height="4" />
        <rect x="0" y="26" width="4" height="4" />
        <rect x="8" y="8" width="3" height="3" />
        <rect x="19" y="8" width="3" height="3" />
        <rect x="8" y="19" width="3" height="3" />
      </g>
      <path d="M4 2H25M2 4V26M4 28H14M27 4V16M11 9H19M9 11V19M11 21Q19 18 21 11" fill="none" stroke="#777" strokeWidth="1.4" />
      <polygon points="14,26 24,13 29,17 19,30" fill="#e39b5b" />
      <circle cx="28" cy="15" r="3" fill="#d32f2f" />
      <polygon points="14,26 19,30 13,32" fill="#666" />
    </Ico>
  );
}

function SmallExtrude() {
  return (
    <Ico w={31} h={32}>
      <rect x="0" y="5" width="19" height="21" fill={BLUE} />
      <polygon points="0,5 5,0 24,0 19,5" fill={BLUE_L} />
      <polygon points="19,5 24,0 24,19 19,26" fill={BLUE_D} />
      <rect x="0" y="28" width="19" height="4" fill="#b8b8b8" />
      <polygon points="19,28 24,21 24,25 19,32" fill="#c8c8c8" />
      <path d="M28 4V26" stroke="#333" strokeWidth="1.4" />
      <polygon points="25.5,6 28,1 30.5,6" fill="#333" />
    </Ico>
  );
}

function Timeline() {
  const stubs = ['w-[46px]', 'w-[48px]', 'w-[48px]', 'w-[48px]', 'w-[48px]'];
  return (
    <div className="relative flex h-[97px] items-start bg-[#f1f1f1]">
      <div className="absolute left-0 right-0 top-0 flex h-[2px] bg-[#e2e2e2]">
        <span className="w-[268px] bg-[#cccccc]" />
        <span className="ml-auto w-[90px] bg-[#cccccc]" />
      </div>
      <div className="flex h-[80px] items-center pl-[22px] pt-[16px]">
        <Ico w={22} h={24}>
          <rect x="0" y="0" width="4" height="24" fill="#666" />
          <polygon points="22,0 22,24 5,12" fill="#666" />
        </Ico>
        <span className="ml-[26px] flex">
          <Ico w={26} h={24}>
            <polygon points="18,0 18,24 0,12" fill="#666" />
            <rect x="21" y="7" width="5" height="12" fill="#666" />
          </Ico>
        </span>
        <span className="ml-[26px] flex">
          <Ico w={24} h={30}>
            <polygon points="0,0 0,30 24,15" fill="#666" />
          </Ico>
        </span>
        <span className="ml-[24px] flex">
          <Ico w={26} h={24}>
            <rect x="0" y="7" width="5" height="12" fill="#666" />
            <polygon points="8,0 8,24 26,12" fill="#666" />
          </Ico>
        </span>
        <span className="ml-[26px] flex">
          <Ico w={22} h={24}>
            <polygon points="0,0 0,24 17,12" fill="#666" />
            <rect x="18" y="0" width="4" height="24" fill="#666" />
          </Ico>
        </span>
      </div>
      <div className="ml-[48px] pt-[24px]">
        <div className="flex h-[48px] items-center">
          <SmallSketch />
          <span className="ml-[8px] flex h-[48px] w-[48px] items-center justify-center rounded-[4px] bg-[#d9d9d9]">
            <SmallSketch />
          </span>
          <span className="ml-[8px] flex"><SmallExtrude /></span>
          <span className="ml-[18px] flex"><SmallExtrude /></span>
          <span className="ml-[16px] flex"><SmallSketch /></span>
          <span className="ml-[17px] flex"><SmallExtrude /></span>
        </div>
        <div className="ml-[3px] flex w-[255px] border-b-[4px] border-[#cccccc] pl-[13px]">
          {stubs.map((w, i) => (
            <span key={i} className={`h-[8px] border-l-[4px] border-[#cccccc] ${w}`} />
          ))}
          <span className="h-[8px] border-l-[4px] border-[#cccccc]" />
        </div>
      </div>
      <div className="ml-[-4px] pt-[20px]">
        <Ico w={24} h={64}>
          <polygon points="0,0 24,0 24,6 12,18 0,6" fill="#666" />
          <rect x="10" y="10" width="4" height="54" fill="#666" />
        </Ico>
      </div>
      <FaCog className="absolute right-[28px] top-[34px] h-[30px] w-[30px] text-[#808080]" />
    </div>
  );
}

export default function App() {
  return (
    <div className="relative flex h-[1502px] w-[2560px] flex-col overflow-hidden bg-white font-['Liberation_Sans',Arial,sans-serif]">
      <TitleBar />
      <TabBar />
      <Ribbon />
      <div className="relative min-h-0 flex-1">
        <ViewportDrawing />
        <div className="relative flex h-full w-[608px] flex-col pb-[8px] pl-[8px] pt-[10px]">
          <Panel title="BROWSER" back sign="-" />
          <Tree />
          <div className="mt-auto">
            <Panel title="COMMENTS" sign="+" />
          </div>
        </div>
        <ViewCube />
        <NavBar />
      </div>
      <Timeline />
      <div className="absolute right-[12px] top-[120px] flex h-[48px] w-[214px] items-center justify-center rounded-full bg-[#4d4d4d] font-['Open_Sans',sans-serif] text-[23px] font-semibold text-white">
        Franny Stroik
      </div>
    </div>
  );
}
